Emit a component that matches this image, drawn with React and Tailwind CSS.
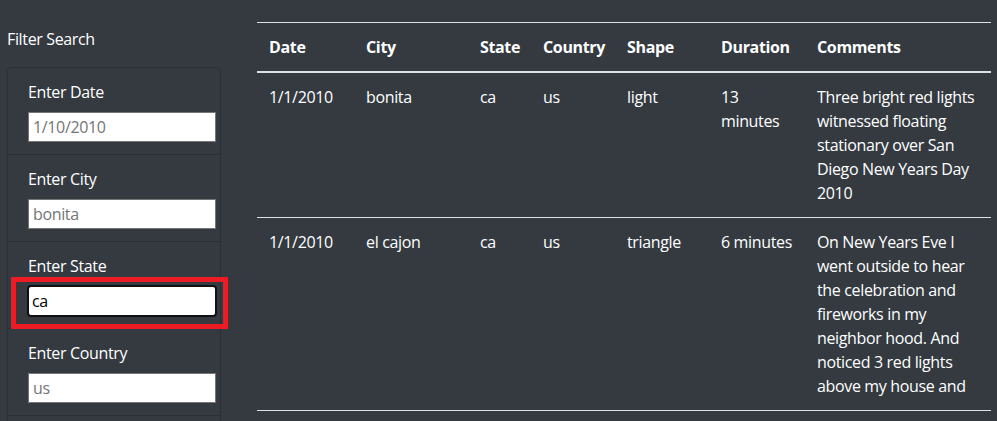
import React from 'react';

const filters = [
  { label: 'Enter Date', placeholder: '1/10/2010' },
  { label: 'Enter City', placeholder: 'bonita' },
  { label: 'Enter State', value: 'ca', focused: true },
  { label: 'Enter Country', placeholder: 'us' },
];

const rows = [
  {
    date: '1/1/2010',
    city: 'bonita',
    state: 'ca',
    country: 'us',
    shape: 'light',
    duration: ['13', 'minutes'],
    comments: [
      'Three bright red lights',
      'witnessed floating',
      'stationary over San',
      'Diego New Years Day',
      '2010',
    ],
  },
  {
    date: '1/1/2010',
    city: 'el cajon',
    state: 'ca',
    country: 'us',
    shape: 'triangle',
    duration: ['6 minutes'],
    comments: [
      'On New Years Eve I',
      'went outside to hear',
      'the celebration and',
      'fireworks in my',
      'neighbor hood. And',
      'noticed 3 red lights',
      'above my house and',
    ],
  },
];

const headers = ['Date', 'City', 'State', 'Country', 'Shape', 'Duration', 'Comments'];
const widths = ['w-[97px]', 'w-[114px]', 'w-[63px]', 'w-[84px]', 'w-[94px]', 'w-[96px]', 'w-[186px]'];

const Lines = ({ lines }) =>
  lines.map((l, i) => (
    <React.Fragment key={i}>
      {l}
      {i < lines.length - 1 && <br />}
    </React.Fragment>
  ));

export default function App() {
  return (
    <div className="relative flex h-[421px] overflow-hidden bg-[#343a40] text-base leading-6 tracking-[-0.35px] text-white font-['Segoe_UI','Open_Sans',sans-serif]">
      {/* Sidebar filters */}
      <aside className="w-[250px] shrink-0 pl-[7px] pt-[27px]">
        <div>Filter Search</div>
        <ul className="mt-4 w-[214px] rounded border border-[#2b3036] pb-10">
          {filters.map((f) => (
            <li key={f.label} className="border-b border-[#2b3036] px-5 py-3">
              <label className="mb-2 block">{f.label}</label>
              {f.focused ? (
                <input
                  type="text"
                  defaultValue={f.value}
                  className="block h-[30px] w-[188px] rounded-[3px] border border-white bg-white pl-[3px] text-black outline-2 outline-offset-[-1px] outline-[#101010]"
                />
              ) : (
                <input
                  type="text"
                  placeholder={f.placeholder}
                  className="block h-[30px] w-[188px] border border-[#767676] bg-white pl-[4px] text-black outline-none placeholder:text-[#757575]"
                />
              )}
            </li>
          ))}
        </ul>
      </aside>

      {/* Results table */}
      <main className="pl-[7px] pt-[22px]">
        <table className="w-[734px] table-fixed border-collapse">
          <colgroup>
            {widths.map((w, i) => (
              <col key={i} className={w} />
            ))}
          </colgroup>
          <thead>
            <tr className="border-t border-[#dee2e6]">
              {headers.map((h) => (
                <th key={h} className="border-b-2 border-[#dee2e6] p-3 text-left font-bold">
                  {h}
                </th>
              ))}
            </tr>
          </thead>
          <tbody>
            {rows.map((r, i) => (
              <tr key={i} className="border-t border-[#dee2e6] align-top">
                <td className="p-3">{r.date}</td>
                <td className="p-3">{r.city}</td>
                <td className="p-3">{r.state}</td>
                <td className="p-3">{r.country}</td>
                <td className="p-3">{r.shape}</td>
                <td className="whitespace-nowrap p-3">
                  <Lines lines={r.duration} />
                </td>
                <td className="whitespace-nowrap p-3">
                  <Lines lines={r.comments} />
                </td>
              </tr>
            ))}
            <tr className="border-t border-[#dee2e6]">
              <td colSpan={7} className="h-6" />
            </tr>
          </tbody>
        </table>
      </main>

      {/* Annotation highlight */}
      <div className="pointer-events-none absolute left-[11px] top-[277px] h-[52px] w-[217px] border-[5px] border-[#ed1c24]" />
    </div>
  );
}
